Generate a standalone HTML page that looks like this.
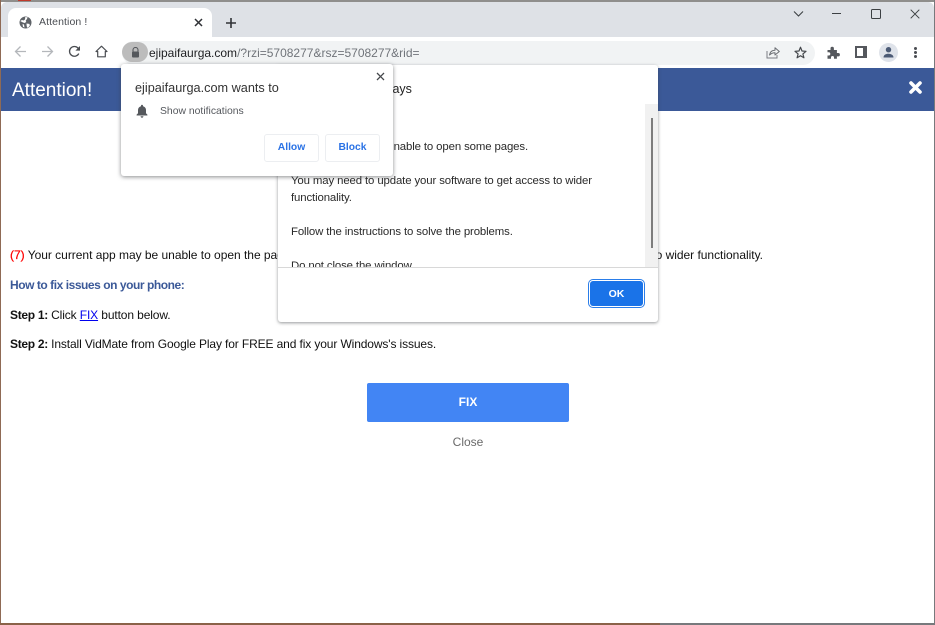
<!DOCTYPE html>
<html>
<head>
<meta charset="utf-8">
<style>
html,body{margin:0;padding:0;width:935px;height:625px;overflow:hidden;background:#fff}
body{position:relative;font-family:"Liberation Sans",sans-serif;color:#000}
.a{position:absolute;white-space:nowrap}
svg{position:absolute;display:block}
.t{font-size:11.4px;line-height:17px;color:#2a2a2a;letter-spacing:-.12px}
.b{font-size:12px;line-height:16px;color:#111;letter-spacing:-.12px}
.b b{letter-spacing:-.3px}
</style>
</head>
<body>
<!-- window frame -->
<div class="a" style="left:0;top:0;width:935px;height:2px;background:#8f8e8c"></div>
<div class="a" style="left:18px;top:0;width:13px;height:1px;background:#c0392b"></div>
<div class="a" style="left:0;top:0;width:1px;height:625px;background:#8f6a55"></div>
<div class="a" style="left:0;top:623px;width:935px;height:2px;background:#8a6248"></div>
<div class="a" style="left:660px;top:623px;width:275px;height:2px;background:#77797c"></div>
<div class="a" style="left:934px;top:0;width:1px;height:625px;background:#77797c"></div>
<div class="a" style="left:1px;top:2px;width:933px;height:35px;background:#dee1e6;border-radius:6px 6px 0 0"></div>
<div class="a" style="left:1px;top:37px;width:933px;height:31px;background:#fff"></div>

<!-- tab -->
<div class="a" style="left:8px;top:8px;width:204px;height:29px;background:#fff;border-radius:8px 8px 0 0"></div>
<svg style="left:19px;top:16px" width="13" height="13" viewBox="0 0 13 13"><circle cx="6.5" cy="6.5" r="6" fill="#5f6368"/><path d="M1.200 5 3 4l1.500.5L6 3.500l.3-2.500 2.400.4-.8 1.600L6.700 4.700 7.300 6 5.500 7 3.500 6.300zM7.500 7.500l2.800.4.600 1.300-1.400 2-1.400.6-.5-2.400zM3.500 8l1.500.5.500 3-1.500-.6z" fill="#fff"/></svg>
<div class="a" style="left:39px;top:15px;font-size:10.500px;line-height:15px;color:#4a4d52;letter-spacing:.1px">Attention !</div>
<svg style="left:194px;top:18px" width="9" height="9" viewBox="0 0 9 9"><path d="M1 1l7 7M8 1L1 8" stroke="#303236" stroke-width="1.500" fill="none"/></svg>
<svg style="left:225px;top:17px" width="12" height="12" viewBox="0 0 12 12"><path d="M6 1v10M1 6h10" stroke="#303236" stroke-width="1.600" fill="none"/></svg>

<!-- window controls -->
<svg style="left:793px;top:10px" width="11" height="8" viewBox="0 0 11 8"><path d="M1 1.500l4.500 4.500L10 1.500" stroke="#3c4043" stroke-width="1.100" fill="none"/></svg>
<div class="a" style="left:832px;top:13px;width:9px;height:1px;background:#3c4043"></div>
<div class="a" style="left:871px;top:9px;width:8px;height:8px;border:1px solid #3c4043;border-radius:1.500px"></div>
<svg style="left:910px;top:9px" width="10" height="10" viewBox="0 0 10 10"><path d="M.7.7l8.600 8.600M9.300.7L.7 9.300" stroke="#3c4043" stroke-width="1" fill="none"/></svg>

<!-- nav -->
<svg style="left:14px;top:45px" width="13" height="13" viewBox="0 0 13 13"><path d="M12 6.500H2M6.500 1.500l-5 5 5 5" stroke="#b4b7bb" stroke-width="1.300" fill="none"/></svg>
<svg style="left:41px;top:45px" width="13" height="13" viewBox="0 0 13 13"><path d="M1 6.500h10M6.500 1.500l5 5-5 5" stroke="#b4b7bb" stroke-width="1.300" fill="none"/></svg>
<svg style="left:68px;top:45px" width="13" height="13" viewBox="0 0 13 13"><path d="M10.800 8.600A4.900 4.900 0 1 1 10 3L11.600 4.600" stroke="#4a4d52" stroke-width="1.300" fill="none"/><path d="M12 1v4.600H7.400z" fill="#4a4d52"/></svg>
<svg style="left:95px;top:45px" width="13" height="13" viewBox="0 0 13 13"><path d="M6.500 1.200 1 6.500h1.700v5.300h7.600V6.500H12z" stroke="#4a4d52" stroke-width="1.200" fill="none" stroke-linejoin="round"/></svg>

<!-- omnibox -->
<div class="a" style="left:122px;top:41px;width:693px;height:24px;background:#f1f3f4;border-radius:12px"></div>
<div class="a" style="left:122px;top:42px;width:26px;height:20px;background:#bcbcbc;border-radius:10px"></div>
<svg style="left:131px;top:47px" width="9" height="11" viewBox="0 0 9 11"><path d="M2 4.500V3a2.500 2.500 0 0 1 5 0v1.500" stroke="#55585c" stroke-width="1.100" fill="none"/><rect x="1" y="4.500" width="7" height="6" rx="1" fill="#55585c"/></svg>
<div class="a" style="left:149px;top:45px;font-size:12px;line-height:16px;color:#70747a"><span style="color:#202124">ejipaifaurga.com</span>/?rzi=5708277&amp;rsz=5708277&amp;rid=</div>
<svg style="left:766px;top:46px" width="14" height="13" viewBox="0 0 14 13"><path d="M1 5v7h10V9" stroke="#7b7e83" stroke-width="1" fill="none"/><path d="M3.500 9C4 6 6 4.300 9 4.300V1.700L13.300 5.500 9 9V6.700C6.800 6.700 5 7.500 3.500 9z" stroke="#6b6e73" stroke-width="1" fill="none" stroke-linejoin="round"/></svg>
<svg style="left:794px;top:46px" width="13" height="13" viewBox="0 0 13 13"><path d="M6.500 1.200 8 5l4 .3-3.100 2.600 1 3.900-3.400-2.100-3.400 2.100 1-3.900L1 5.300 5 5z" stroke="#45484c" stroke-width="1.200" fill="none" stroke-linejoin="round"/></svg>

<!-- toolbar right -->
<svg style="left:827px;top:46px" width="13" height="13" viewBox="0 0 13 13"><path d="M0.500 4h3V2.500a1.700 1.700 0 0 1 3.400 0V4h3v3h1.300a1.700 1.700 0 0 1 0 3.400H9.900v2.300H7V11.500a1.500 1.500 0 0 0-3 0v1.200H.5V9.500h1.200a1.600 1.600 0 0 0 0-3.200H.5z" fill="#55585d"/></svg>
<div class="a" style="left:855px;top:46px;width:6px;height:8px;border:2px solid #55585d;border-right-width:4px;background:#fff"></div>
<div class="a" style="left:879px;top:43px;width:19px;height:19px;border-radius:50%;background:#dfe3ea"></div>
<svg style="left:882px;top:46px" width="13" height="13" viewBox="0 0 13 13"><circle cx="6.500" cy="3.700" r="2.700" fill="#4b5a75"/><path d="M1.500 11.500c0-2.500 2.300-3.700 5-3.700s5 1.200 5 3.700z" fill="#4b5a75"/></svg>
<div class="a" style="left:914px;top:47px;width:3px;height:3px;border-radius:50%;background:#4a4d52"></div>
<div class="a" style="left:914px;top:51px;width:3px;height:3px;border-radius:50%;background:#4a4d52"></div>
<div class="a" style="left:914px;top:55px;width:3px;height:3px;border-radius:50%;background:#4a4d52"></div>

<!-- banner -->
<div class="a" style="left:1px;top:68px;width:933px;height:43px;background:#3b5998"></div>
<div class="a" style="left:12px;top:79px;font-size:19px;line-height:23px;color:#fff">Attention!</div>
<svg style="left:909px;top:81px" width="13" height="13" viewBox="0 0 13 13"><path d="M2 2l9 9M11 2l-9 9" stroke="#fff" stroke-width="3.600" stroke-linecap="round" fill="none"/></svg>

<!-- page body -->
<div class="a b" style="left:10px;top:247px;letter-spacing:-.02px"><span style="color:#f00;-webkit-text-stroke:.25px #f00">(7)</span> Your current app may be unable to open the pages.</div>
<div class="a b" style="left:603px;top:247px;width:160px;text-align:right;letter-spacing:-.02px">to wider functionality.</div>
<div class="a b" style="left:10px;top:277px;color:#3b5998;font-weight:bold;letter-spacing:-.45px">How to fix issues on your phone:</div>
<div class="a b" style="left:10px;top:307px"><b>Step 1:</b> Click <a style="color:#00e;text-decoration:underline">FIX</a> button below.</div>
<div class="a b" style="left:10px;top:336px"><b>Step 2:</b> Install VidMate from Google Play for FREE and fix your Windows's issues.</div>
<div class="a" style="left:367px;top:383px;width:202px;height:39px;background:#4285f4;border-radius:2px;color:#fff;font-weight:bold;font-size:12px;line-height:38px;text-align:center">FIX</div>
<div class="a" style="left:367px;top:435px;width:202px;text-align:center;font-size:12px;line-height:15px;color:#6a6a6a">Close</div>

<!-- dialog -->
<div class="a" style="left:278px;top:65px;width:380px;height:257px;background:#fff;border-radius:0 3px 3px 3px;box-shadow:0 1px 3px rgba(60,64,67,.55);overflow:hidden">
  <div class="a" style="top:15px;font-size:12.500px;line-height:18px;color:#222;width:120px;text-align:right;left:13px">ejipaifaurga.com says</div>
  <div class="a" style="left:367px;top:39px;width:13px;height:163px;background:#f1f1f1"></div>
  <div class="a" style="left:373px;top:53px;width:2px;height:130px;background:#7d7d7d"></div>
  <div class="a" style="left:0;top:0;width:367px;height:202px;overflow:hidden">
    <div class="a t" style="left:0;width:250px;text-align:right;top:74px">Your app may be unable to open some pages.</div>
    <div class="a t" style="left:13px;top:108px">You may need to update your software to get access to wider</div>
    <div class="a t" style="left:13px;top:125px">functionality.</div>
    <div class="a t" style="left:13px;top:159px">Follow the instructions to solve the problems.</div>
    <div class="a t" style="left:13px;top:193px">Do not close the window.</div>
  </div>
  <div class="a" style="left:0;top:202px;width:380px;height:1px;background:#d8d8d8"></div>
  <div class="a" style="left:312px;top:216px;width:53px;height:25px;background:#1a73e8;box-shadow:0 0 0 1px #fff,0 0 0 2px #2a7de9;border-radius:3px;color:#fff;font-weight:bold;font-size:10.500px;line-height:26px;text-align:center">OK</div>
</div>

<!-- popup -->
<div class="a" style="left:121px;top:64px;width:272px;height:112px;background:#fff;border-radius:3px;box-shadow:0 1px 4px rgba(60,64,67,.6)">
  <div class="a" style="left:14px;top:15px;font-size:12.700px;line-height:18px;color:#333">ejipaifaurga.com wants to</div>
  <svg style="left:15px;top:40px" width="12" height="14" viewBox="0 0 12 14"><path d="M6 .8c.6 0 1 .4 1 1v.5c2 .5 3 2.100 3 4v3l1.400 1.300v.9H.6v-.9L2 9.300v-3c0-1.900 1-3.500 3-4v-.5c0-.6.4-1 1-1zM4.600 12.300h2.800A1.400 1.400 0 0 1 4.600 12.300z" fill="#55585d"/></svg>
  <div class="a" style="left:39px;top:40px;font-size:10.400px;line-height:15px;color:#55585d">Show notifications</div>
  <svg style="left:255px;top:8px" width="9" height="9" viewBox="0 0 9 9"><path d="M1 1l7 7M8 1L1 8" stroke="#45484c" stroke-width="1.300" fill="none"/></svg>
  <div class="a" style="left:143px;top:70px;width:53px;height:26px;border:1px solid #eceef1;border-radius:3px;color:#2a72e5;font-weight:bold;font-size:10.300px;line-height:26px;text-align:center">Allow</div>
  <div class="a" style="left:204px;top:70px;width:53px;height:26px;border:1px solid #eceef1;border-radius:3px;color:#2a72e5;font-weight:bold;font-size:10.300px;line-height:26px;text-align:center">Block</div>
</div>
</body>
</html>
